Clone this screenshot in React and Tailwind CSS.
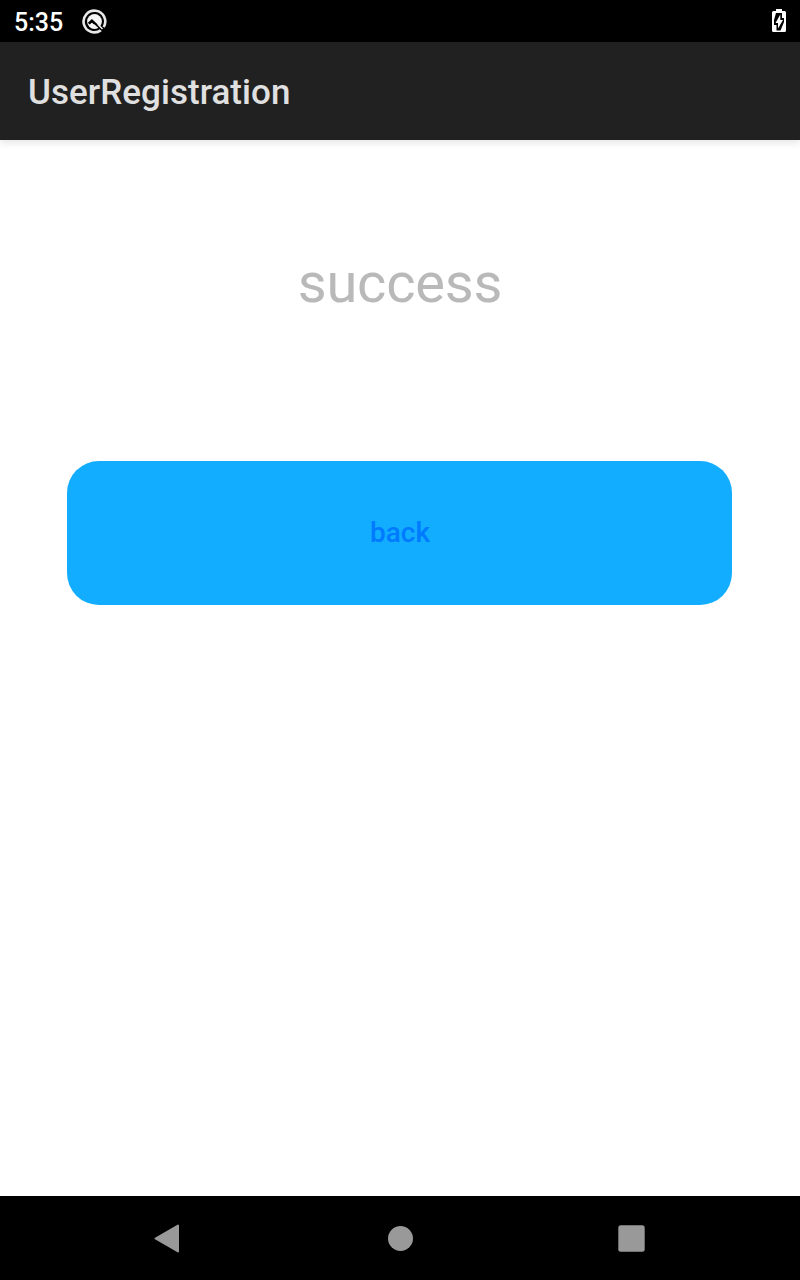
export default function App() {
  return (
    <div className="flex h-[1280px] w-[800px] flex-col overflow-hidden bg-white font-['Roboto',sans-serif]">
      <header className="flex h-[42px] shrink-0 items-center bg-black pl-[14px] pr-[14px] text-white">
        <span className="w-[68px] pt-[4px] text-[25px] leading-[30px] font-medium">5:35</span>
        <svg width="25" height="25" viewBox="0 0 24 24" fill="none" className="block">
          <path d="M18.200 20.300A10.400 10.400 0 1 1 20.800 17.400" stroke="#e8e8e8" strokeWidth="2.500" />
          <circle cx="12" cy="12" r="7.100" fill="#f4f4f4" />
          <path d="M6.300 14L9.500 11L19 20" stroke="#000" strokeWidth="2" />
          <path d="M7 14.500L9.500 12.200L12 14.500" stroke="#000" strokeWidth="1.200" />
          <path d="M15.200 14.700l4.500 4.500" stroke="#eee" strokeWidth="1.500" />
        </svg>
        <svg width="14" height="24" viewBox="0 0 14 24" className="ml-auto block">
          <path d="M4 0h6v2h2.500q1.500 0 1.500 1.500v18q0 1.500-1.500 1.500h-11Q0 23 0 21.500v-18Q0 2 1.500 2H4z" fill="#fff" />
          <path d="M4 4h6v5h2v4L8.500 21.500H4.500V16H2v-5z" fill="#000" />
          <path d="M8.300 5.500V11H11L6 19.500V14H3.500z" fill="#fff" />
        </svg>
      </header>
      <div className="z-10 flex h-[98px] shrink-0 items-center bg-[#212121] pl-[28px] shadow-[0_3px_7px_rgba(0,0,0,0.1)]">
        <h1 className="pt-[4px] text-[35px] leading-[42px] font-medium tracking-[0.04px] text-[#e0e0e0]">UserRegistration</h1>
      </div>
      <main className="flex flex-1 flex-col items-center">
        <p className="mt-[110px] text-[56px] leading-[66px] tracking-[-0.2px] text-[#b9b9b9]">success</p>
        <button className="mt-[145px] mr-[1.300px] h-[144.400px] w-[665.400px] rounded-[32px] bg-[#12adff] pl-[1.300px] text-[28px] font-medium text-[#007aff]">back</button>
      </main>
      <nav className="flex h-[84px] shrink-0 bg-black">
        <svg width="800" height="84" viewBox="0 0 800 84" fill="#999">
          <path d="M155.500 42.500L178 29.600v25.800z" stroke="#999" strokeWidth="2" strokeLinejoin="round" />
          <circle cx="400.500" cy="42.500" r="12.500" />
          <rect x="618.300" y="29.300" width="26.400" height="26.400" rx="2.500" />
        </svg>
      </nav>
    </div>
  );
}
